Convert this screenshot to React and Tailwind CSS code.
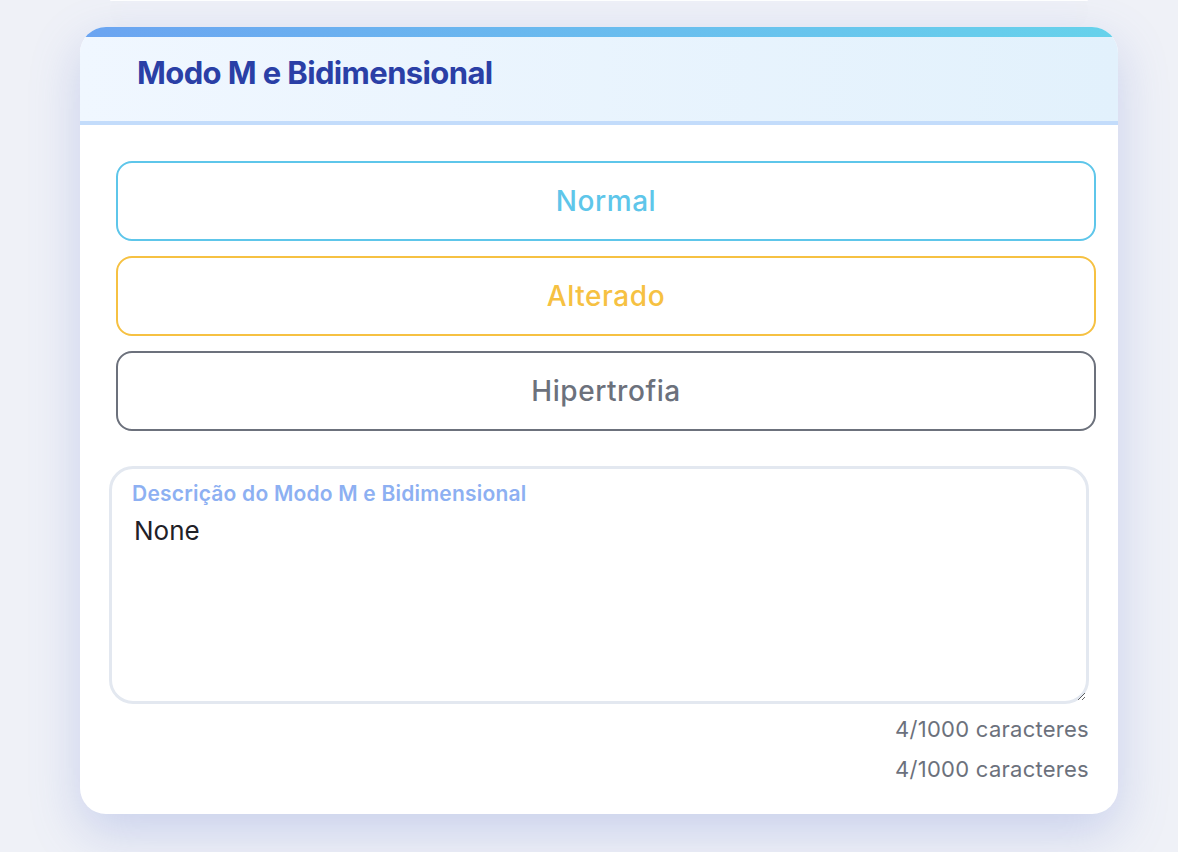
import React from 'react';

const OPTIONS = [
  { label: 'Normal', cls: 'border-[#5ec6ea] text-[#5ec6ea]' },
  { label: 'Alterado', cls: 'border-[#f6c142] text-[#f6c142]' },
  { label: 'Hipertrofia', cls: 'border-[#6c717c] text-[#6c717c]' },
];

export default function App() {
  const text = 'None';

  return (
    <div
      className="min-h-screen bg-[#eff1f7] pb-10"
      style={{ fontFamily: 'Inter, "Noto Sans", sans-serif' }}
    >
      <div className="ml-[110px] w-[978px] h-px bg-white rounded-b-lg shadow-[0_10px_40px_rgba(110,130,210,0.25)]" />

      <div className="mt-[26px] ml-[80px] w-[1038px] bg-white rounded-[26px] overflow-hidden shadow-[0_18px_50px_rgba(105,125,210,0.28)]">
        <div className="h-[10px] bg-gradient-to-r from-[#6ba4f1] to-[#66d2eb]" />
        <div className="h-[88px] pt-[18px] pl-[57px] bg-gradient-to-r from-[#f0f7ff] to-[#e2f1fc] border-b-4 border-[#c3dcfb]">
          <h2 className="text-[31px] leading-[36px] font-bold tracking-[-0.02em] text-[#2a3fa6]">
            Modo M e Bidimensional
          </h2>
        </div>

        <div className="pt-9 pb-[30px]">
          <div className="ml-9 w-[980px] flex flex-col gap-[15px]">
            {OPTIONS.map(o => (
              <button
                key={o.label}
                className={`h-[80px] w-full rounded-2xl border-2 bg-white text-[28px] font-medium tracking-[0.02em] ${o.cls}`}
              >
                {o.label}
              </button>
            ))}
          </div>

          <div className="relative mt-[35px] ml-[29px] w-[980px]">
            <span className="absolute top-[13px] left-[23px] text-[21px] leading-[30px] font-semibold tracking-[0.01em] text-[#8db0f2]">
              Descrição do Modo M e Bidimensional
            </span>
            <textarea
              defaultValue={text}
              className="block w-full h-[238px] border-[3px] border-[#e3e8f0] rounded-[24px] pt-[43px] px-[22px] text-[26px] leading-[38px] text-[#1f2127] outline-none"
            />
            <p className="mt-[10px] text-right text-[22px] leading-[30px] tracking-[0.012em] text-[#6c717c]">
              {text.length}/1000 caracteres
            </p>
            <p className="mt-[10px] text-right text-[22px] leading-[30px] tracking-[0.012em] text-[#6c717c]">
              {text.length}/1000 caracteres
            </p>
          </div>
        </div>
      </div>
    </div>
  );
}
